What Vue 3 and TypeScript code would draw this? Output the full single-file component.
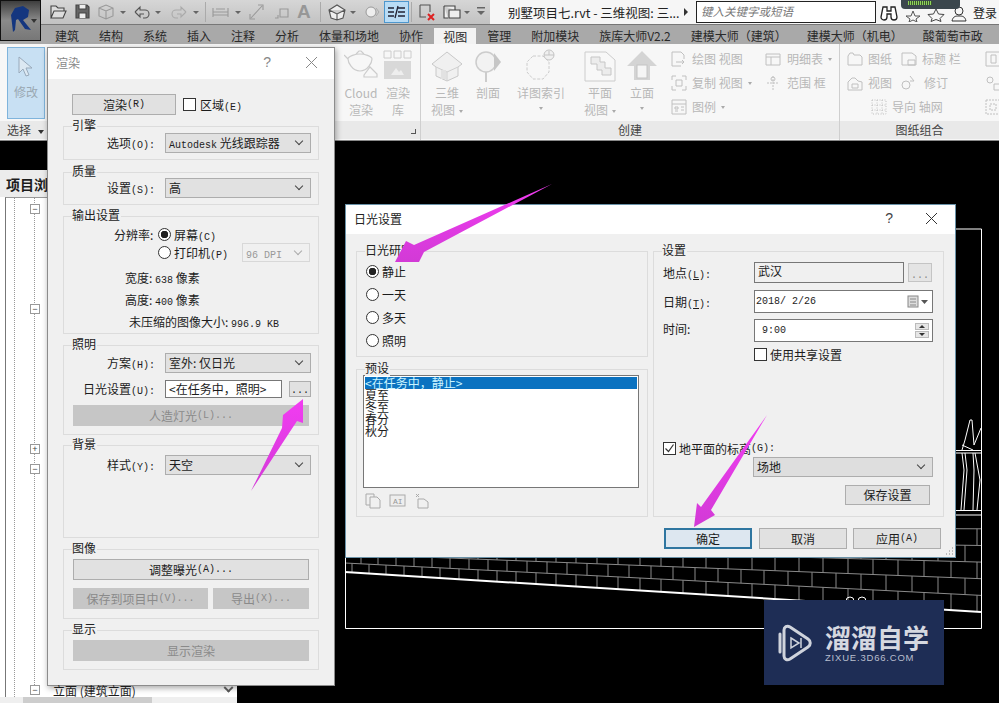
<script setup lang="ts">
const lineY = (x: number) => 572 + (x - 345) * (40 / 636)
const rowH = (x: number) => 9 + (x - 345) * 0.012
const yAt = (x: number, k: number) => lineY(x) - k * rowH(x)
const rows = [1, 2, 3, 4, 5]
const brickLines = rows.map((k) => `M345 ${yAt(345, k).toFixed(1)}L981 ${yAt(981, k).toFixed(1)}`).join('')
let joints = ''
for (const k of [0, 1, 2, 3, 4]) {
  let x = 352 + (k % 2) * 9
  while (x < 981) {
    joints += `M${x.toFixed(0)} ${yAt(x, k).toFixed(1)}L${x.toFixed(0)} ${yAt(x, k + 1).toFixed(1)}`
    x += 17 + (x - 345) * 0.016
  }
}
const treeNodes = [
  { sign: 'm', gap: 12 },
  { sign: 'm', gap: 90 },
  { sign: 'p', gap: 130 },
  { sign: 'm', gap: 10 },
]
const tabs = ['建筑', '结构', '系统', '插入', '注释', '分析', '体量和场地', '协作', '视图', '管理', '附加模块', '族库大师V2.2', '建模大师（建筑）', '建模大师（机电）', '酸葡萄市政']
</script>

<template>
  <div class="app">
    <!-- free drawing canvas of the CAD view -->
    <svg class="cad" width="999" height="703" viewBox="0 0 999 703">
      <path :d="brickLines" stroke="#8a8a8a" stroke-width="1" fill="none" />
      <path :d="joints" stroke="#8a8a8a" stroke-width="1" fill="none" />
      <path d="M345 572L981 612" stroke="#fff" stroke-width="2" fill="none" />
      <path d="M345.500 555V628.500H981.500V229H950" stroke="#fff" stroke-width="1" fill="none" />
      <path d="M956 450.500H981M956 453H981M956 510.500H981M956 515H981" stroke="#fff" stroke-width="1.200" fill="none" />
      <path d="M961 510L964 470 962 453M964 510L967 470 965 453M973 510L974 470 973 453M977 510L980 480 975 453M962 450L965 440 970 420 972 420 974 445M974 445L981 428M962 445L973 450M846 601a4 4 0 0 1 8 0M858 601a4 4 0 0 1 8 0" stroke="#fff" stroke-width="1" fill="none" />
    </svg>

    <header class="topbar">
      <div class="qat">
        <svg width="449" height="24" viewBox="41 0 449 24">
          <g fill="none" stroke="#444" stroke-width="1.100">
            <path d="M51 18V6h5l2 2h6v3M51 18l3-7h12l-3 7z" fill="#ddd" />
            <path d="M76 5h11l2 2v11H76z" fill="#666" />
            <path d="M79 5v4h7V5M79 18v-5h7v5" fill="#eee" />
          </g>
          <g fill="none" stroke="#999" stroke-width="1.100">
            <path d="M99 8l7-3 7 3v8l-7 3-7-3zM99 8l7 3 7-3M106 11v8" />
            <path d="M135 12l5-5v3h5a4 4 0 0 1 0 8h-2M135 12l5 5v-3h4" stroke="#555" />
            <path d="M186 12l-5-5v3h-5a4 4 0 0 0 0 8h2M186 12l-5 5v-3h-4" stroke="#aaa" />
            <path d="M213 8v9M228 8v9M213 12h15M213 15h15M216 9h9" />
            <path d="M251 18L262 6M258 5h5v5M250 14v5h5" />
            <path d="M275 18h3v-3M280 9h8v8h-8z" />
          </g>
          <text x="297" y="18" font-family="Liberation Sans" font-weight="700" font-size="19" fill="#979797">A</text>
          <path d="M329 10l8-5 8 5-2 8-6 2-6-2zM329 10l8 4 8-4M337 14v6" fill="#eee" stroke="#555" stroke-width="1.100" />
          <circle cx="371" cy="12" r="5" fill="#eee" stroke="#999" />
          <path d="M376 8l3 4-3 4" fill="none" stroke="#aaa" />
          <rect x="384.500" y="1.500" width="24" height="21" fill="#b9dcf5" stroke="#4e97cd" />
          <path d="M388 8h6M388 12h6M388 16h6M398 8h7M398 12h7M398 16h7M395 18l3-12" stroke="#223" stroke-width="1.300" fill="none" />
          <path d="M420 5h10v7M420 5v12h6" fill="none" stroke="#555" stroke-width="1.100" />
          <path d="M428 14l6 6M434 14l-6 6" stroke="#d22" stroke-width="2" />
          <path d="M444 6h11v4M444 6v12h4M449 10h11v8h-11z" fill="#eee" stroke="#444" stroke-width="1.100" />
          <g fill="#666">
            <path d="M120 11h6l-3 3zM155 11h6l-3 3zM193 11h6l-3 3zM235 11h6l-3 3zM350 11h6l-3 3zM464 11h6l-3 3z" />
            <path d="M477 11h8l-4 4zM477 7h8v1.500h-8z" />
          </g>
          <path d="M205.500 2v20M320.500 2v20M411.500 2v20" stroke="#aaa" />
        </svg>
      </div>
      <div class="title">别墅项目七.rvt - 三维视图: 三...</div>
      <div class="search-arrow"></div>
      <div class="search">键入关键字或短语</div>
      <div class="tools">
        <svg width="20" height="20" viewBox="0 0 20 20"><path d="M4 5h4v4h4V5h4l2 10a3 3 0 0 1-6 0v-3H8v3a3 3 0 0 1-6 0z" fill="#fff" stroke="#222" stroke-width="1.300" /></svg>
        <svg width="18" height="20" viewBox="0 0 18 20"><path d="M9 9l2 5 5 0-4 3 1 3-4-2-4 2 1-3-4-3 5 0z" fill="none" stroke="#555" /></svg>
        <svg width="18" height="20" viewBox="0 0 18 20"><path d="M9 7l2.500 5 5.500 .5-4 4 1 3-5-2-5 2 1-3-4-4 5.500-.5z" fill="none" stroke="#444" /></svg>
        <svg width="18" height="20" viewBox="0 0 18 20"><circle cx="9" cy="9" r="4" fill="none" stroke="#333" /><path d="M2 19c1-5 4-5 7-5s6 0 7 5z" fill="none" stroke="#333" /></svg>
        <span class="login">登录</span>
      </div>
    </header>

    <nav class="tabs">
      <span v-for="t in tabs" :key="t" class="tab" :class="{ active: t === '视图' }">{{ t }}</span>
    </nav>

    <section class="ribbon">
      <div class="panel p-select">
        <div class="panel-body">
          <div class="modify">
            <svg width="20" height="26" viewBox="0 0 20 26"><path d="M3 2v16l4-4 3 7 3-1-3-7h6z" fill="#dce8f2" stroke="#9ab" /></svg>
            <span>修改</span>
          </div>
        </div>
        <div class="panel-foot left">选择 <i class="tri dark"></i></div>
      </div>

      <div class="panel p-hidden">
        <div class="panel-body end">
          <div class="big cw40">
            <svg width="34" height="33" viewBox="0 0 34 33"><path d="M4 10c0-3 8-5 12-5s12 2 12 5-4 12-12 12S4 13 4 10zM12 5l3-3h2l3 3M4 10L0 6M20 26l6-8 7 7v3H20z" fill="none" stroke="#ccc" stroke-width="1.200" /></svg>
            <span>Cloud</span><span>渲染</span>
          </div>
          <div class="big cw32">
            <svg width="30" height="33" viewBox="0 0 30 33"><path d="M1 2h7v7H1zM11 2h7v7h-7zM21 2h7v7h-7z" fill="none" stroke="#ccc" /><rect x="1" y="12" width="27" height="18" fill="#d8d8d8" /><path d="M8 26l5-7 3 4 2-2 3 5z" fill="#eee" /></svg>
            <span>渲染</span><span>库</span>
          </div>
          <i class="launch"></i>
        </div>
        <div class="panel-foot"></div>
      </div>

      <div class="panel p-create">
        <div class="panel-body create-grid">
          <div class="big">
            <svg width="32" height="33" viewBox="0 0 32 33"><path d="M1 15L16 3l15 12-4 3v9l-11 5-11-5v-9z" fill="#f0f0f0" stroke="#c8c8c8" /><path d="M5 18l11 5 11-5M16 23v9" fill="none" stroke="#cfcfcf" /><path d="M10 21h5v9h-5z" fill="#e2e2e2" /></svg>
            <span>三维</span><span>视图<i class="tri mini"></i></span>
          </div>
          <div class="big">
            <svg width="28" height="33" viewBox="0 0 28 33"><circle cx="12" cy="13" r="10" fill="#f2f2f2" stroke="#ccc" stroke-width="1.500" /><path d="M20 4l7 9-7 9z" fill="#c6c6c6" /><path d="M12 23v10" stroke="#ccc" stroke-width="2" /></svg>
            <span>剖面</span>
          </div>
          <div class="big">
            <svg width="32" height="33" viewBox="0 0 32 33"><path d="M8 7h10l6 6v10l-6 7H8l-6-7V13z" fill="none" stroke="#ccc" stroke-dasharray="3 1.500" /><circle cx="24" cy="6" r="5" fill="#f0f0f0" stroke="#c4c4c4" /><path d="M19 6h10M24 2v4" stroke="#c4c4c4" /></svg>
            <span>详图索引</span><i class="tri mini block"></i>
          </div>
          <div class="big">
            <svg width="32" height="33" viewBox="0 0 32 33"><path d="M1 3h21l9 8v21H1z" fill="#f8f8f8" stroke="#ccc" /><path d="M7 8h9v5h5v6h6v7h-9v-5h-5v-6H7z" fill="#ececec" stroke="#c6c6c6" /></svg>
            <span>平面</span><span>视图<i class="tri mini"></i></span>
          </div>
          <div class="big">
            <svg width="30" height="33" viewBox="0 0 30 33"><path d="M15 2l15 15H23v14H7V17H0z" fill="#d4d4d4" /><rect x="10" y="16" width="10" height="13" fill="#f5f5f5" stroke="#c4c4c4" /></svg>
            <span>立面</span><i class="tri mini block"></i>
          </div>
          <div class="small-col first">
            <div class="si"><svg width="16" height="16" viewBox="0 0 16 16"><path d="M1 1h9l3 3v4M1 1v14h9" fill="none" stroke="#c0c0c0" /><path d="M5 11h8l-2-2m2 2l-2 2" fill="none" stroke="#c0c0c0" /></svg>绘图 视图</div>
            <div class="si"><svg width="16" height="16" viewBox="0 0 16 16"><path d="M1 1h4M1 1v4M11 1h4v4M1 11v4h4M11 15h4v-4M5 5h6v6H5z" fill="none" stroke="#c0c0c0" /></svg>复制 视图 <i class="tri mini"></i></div>
            <div class="si"><svg width="16" height="16" viewBox="0 0 16 16"><path d="M1 1h14v14H1zM1 5h14M4 8h3v2H4zM4 12h3M10 8h3M10 11h3" fill="none" stroke="#c0c0c0" /></svg>图例 <i class="tri mini"></i></div>
          </div>
          <div class="small-col">
            <div class="si"><svg width="18" height="16" viewBox="0 0 18 16"><path d="M2 3h14v11H2zM2 6h14M7 6v8" fill="none" stroke="#c0c0c0" /></svg>明细表 <i class="tri mini"></i></div>
            <div class="si"><svg width="18" height="16" viewBox="0 0 18 16"><path d="M9 1v14M3 8h12" stroke="#c0c0c0" stroke-dasharray="2 1" /><circle cx="9" cy="4" r="2" fill="none" stroke="#c0c0c0" /></svg>范围 框</div>
          </div>
        </div>
        <div class="panel-foot">创建</div>
      </div>

      <div class="panel p-sheet">
        <div class="panel-body sheet-grid">
          <div class="si"><svg width="16" height="16" viewBox="0 0 16 16"><path d="M1 5l2-3h3l1 2h6l2 2v8H1z" fill="none" stroke="#c0c0c0" /></svg>图纸</div>
          <div class="si"><svg width="16" height="16" viewBox="0 0 16 16"><path d="M1 2h10l4 3v9H1zM7 9h7v5H7z" fill="none" stroke="#c0c0c0" /></svg>标题 栏</div>
          <div class="si"><svg width="16" height="16" viewBox="0 0 16 16"><path d="M1 1h14v14H1zM6 4h5v8H6z" fill="none" stroke="#c0c0c0" /></svg></div>
          <div class="si"><svg width="16" height="16" viewBox="0 0 16 16"><path d="M1 7l4-4h3l3 3 4 1v8H1z" fill="none" stroke="#c0c0c0" /><path d="M5 9h6v4H5z" fill="none" stroke="#c0c0c0" /></svg>视图</div>
          <div class="si"><svg width="18" height="16" viewBox="0 0 18 16"><path d="M9 1l4 5H9M1 10a4 4 0 0 1 8 0 4 4 0 0 1-8 0z" fill="none" stroke="#c0c0c0" /></svg>修订</div>
          <div class="si"><svg width="16" height="16" viewBox="0 0 16 16"><circle cx="5" cy="5" r="3" fill="none" stroke="#c0c0c0" /><path d="M9 9h6v6H9z" fill="none" stroke="#c0c0c0" /></svg></div>
          <div></div>
          <div class="si shift"><svg width="16" height="16" viewBox="0 0 16 16"><path d="M1 1h14v14H1zM1 6h14M1 11h14M6 1v14M11 1v14" fill="none" stroke="#c0c0c0" stroke-dasharray="1 1.500" /></svg>导向 轴网</div>
          <div class="si"><svg width="16" height="16" viewBox="0 0 16 16"><path d="M1 1h14v14H1zM5 5h6v6H5z" fill="none" stroke="#c0c0c0" stroke-dasharray="2 1" /></svg></div>
        </div>
        <div class="panel-foot">图纸组合</div>
      </div>
    </section>

    <aside class="browser">
      <div class="b-head">项目浏览器</div>
      <div class="b-tree">
        <div v-for="(n, i) in treeNodes" :key="i" class="node" :class="'g' + n.gap">
          <span class="box">{{ n.sign === 'm' ? '−' : '+' }}</span>
        </div>
        <div class="node last">
          <span class="box">−</span><span class="node-text">立面 (建筑立面)</span><i class="chev"></i>
        </div>
      </div>
      <div class="b-scroll"><i class="thumb"></i></div>
    </aside>

    <!-- app button lies over the title and tab bars -->
    <div class="appbtn">
      <svg width="30" height="30" viewBox="0 0 30 30"><path d="M8 29L6 12 10 5l8-2 6 4-1 7-5 3 8 10-6-1-7-10-2 1-1 10z" fill="#14367f" /></svg>
      <i class="tri appdrop"></i>
    </div>
    <div class="chip"><i></i></div>

    <!-- render dialog -->
    <div class="dlg render">
      <div class="dlg-title"><span class="muted">渲染</span><span class="help">?</span>
        <svg width="13" height="13" viewBox="0 0 13 13"><path d="M1 1l11 11M12 1L1 12" stroke="#888" /></svg>
      </div>
      <div class="render-body">
        <div class="r-top">
          <div class="btn rbtn">渲染<span class="m">(R)</span></div>
          <i class="chk"></i><span>区域<span class="m">(E)</span></span>
        </div>
        <div class="group g1">
          <span class="legend">引擎</span>
          <div class="frow"><label>选项<span class="m">(O):</span></label><div class="sel"><span class="m">Autodesk</span> 光线跟踪器</div></div>
        </div>
        <div class="group g2">
          <span class="legend">质量</span>
          <div class="frow"><label>设置<span class="m">(S):</span></label><div class="sel">高</div></div>
        </div>
        <div class="group g3">
          <span class="legend">输出设置</span>
          <div class="res">
            <label>分辨率:</label><i class="radio on"></i><span>屏幕<span class="m">(C)</span></span>
          </div>
          <div class="res second">
            <label></label><i class="radio"></i><span class="printer">打印机<span class="m">(P)</span></span>
            <div class="sel dis"><span class="m">96 DPI</span></div>
          </div>
          <div class="info">宽度: <span class="m">638</span> 像素</div>
          <div class="info">高度: <span class="m">400</span> 像素</div>
          <div class="info wide">未压缩的图像大小: <span class="m">996.9 KB</span></div>
        </div>
        <div class="group g4">
          <span class="legend">照明</span>
          <div class="frow"><label>方案<span class="m">(H):</span></label><div class="sel">室外: 仅日光</div></div>
          <div class="frow sun"><label>日光设置<span class="m">(U):</span></label><div class="sun-field"><div class="input">&lt;在任务中，照明&gt;</div><div class="dots">...</div></div></div>
          <div class="btn off artificial">人造灯光<span class="m">(L)...</span></div>
        </div>
        <div class="group g5">
          <span class="legend">背景</span>
          <div class="frow"><label>样式<span class="m">(Y):</span></label><div class="sel">天空</div></div>
        </div>
        <div class="group g6">
          <span class="legend">图像</span>
          <div class="btn full">调整曝光<span class="m">(A)...</span></div>
          <div class="two">
            <div class="btn off">保存到项目中<span class="m">(V)...</span></div>
            <div class="btn off">导出<span class="m">(X)...</span></div>
          </div>
        </div>
        <div class="group g7">
          <span class="legend">显示</span>
          <div class="btn off full">显示渲染</div>
        </div>
      </div>
    </div>

    <!-- sun settings dialog -->
    <div class="dlg sunset">
      <div class="dlg-title sun-title"><span>日光设置</span><span class="help">?</span>
        <svg width="13" height="13" viewBox="0 0 13 13"><path d="M1 1l11 11M12 1L1 12" stroke="#333" /></svg>
      </div>
      <div class="sun-cols">
        <div class="sun-left">
          <div class="group study">
            <span class="legend">日光研究</span>
            <div class="ropt"><i class="radio on"></i>静止</div>
            <div class="ropt"><i class="radio"></i>一天</div>
            <div class="ropt"><i class="radio"></i>多天</div>
            <div class="ropt"><i class="radio"></i>照明</div>
          </div>
          <div class="group preset">
            <span class="legend">预设</span>
            <div class="list">
              <div class="li sel-li">&lt;在任务中，静止&gt;</div>
              <div class="li">夏至</div>
              <div class="li">冬至</div>
              <div class="li">春分</div>
              <div class="li">秋分</div>
            </div>
            <div class="list-tools">
              <svg width="17" height="16" viewBox="0 0 17 16"><path d="M1 1h8v3M1 1v11h4M5 4h7l3 3v8H5z" fill="none" stroke="#aaa" /></svg>
              <svg width="17" height="16" viewBox="0 0 17 16"><rect x="1" y="2" width="15" height="11" fill="#eee" stroke="#aaa" /><text x="4" y="11" font-family="Liberation Mono" font-size="8" fill="#999">AI</text></svg>
              <svg width="17" height="16" viewBox="0 0 17 16"><path d="M3 1l3 3M6 1L3 4M5 6h6l4 3v6H5z" fill="none" stroke="#aaa" /></svg>
            </div>
          </div>
        </div>
        <div class="group settings">
          <span class="legend">设置</span>
          <div class="srow"><label>地点<span class="m">(<u>L</u>):</span></label><div class="input gray">武汉</div><div class="dots two-d">...</div></div>
          <div class="srow date"><label>日期<span class="m">(<u>T</u>):</span></label>
            <div class="input tall"><span class="m">2018/ 2/26</span>
              <svg width="22" height="14" viewBox="0 0 22 14"><rect x="1" y="1" width="10" height="11" fill="#ddd" stroke="#888" /><path d="M3 4h6M3 7h6M3 10h6" stroke="#888" /><path d="M14 5h7l-3.500 4z" fill="#555" /></svg>
            </div>
          </div>
          <div class="srow time"><label>时间:</label>
            <div class="input tall"><span class="m pad">9:00</span>
              <div class="spin"><i class="up"></i><i class="down"></i></div>
            </div>
          </div>
          <div class="srow check"><label></label><i class="chk"></i><span>使用共享设置</span></div>
          <div class="ground"><i class="chk checked"><svg width="11" height="11" viewBox="0 0 11 11"><path d="M1.500 5.500l3 3 5-7" fill="none" stroke="#333" stroke-width="1.200" /></svg></i>地平面的标高<span class="m">(G):</span></div>
          <div class="sel site">场地</div>
          <div class="btn save">保存设置</div>
        </div>
      </div>
      <div class="sun-actions">
        <div class="btn act primary">确定</div>
        <div class="btn act">取消</div>
        <div class="btn act">应用<span class="m">(A)</span></div>
      </div>
      <svg class="grip" width="10" height="10" viewBox="0 0 10 10"><path d="M8 2h1M5 5h1M8 5h1M2 8h1M5 8h1M8 8h1" stroke="#bbb" stroke-width="2" /></svg>
    </div>

    <!-- annotation arrows -->
    <svg class="arrows" width="999" height="703" viewBox="0 0 999 703">
      <defs>
        <linearGradient id="mg" x1="0" y1="0" x2="0" y2="1">
          <stop offset="0" stop-color="#f23cf2" />
          <stop offset="1" stop-color="#d23ad6" />
        </linearGradient>
      </defs>
      <path d="M552 184L424 252L419 262L395 262L406 241L414 245z" fill="url(#mg)" />
      <path d="M303 399L303 423L297 421L251 491L282 428L283 415z" fill="url(#mg)" />
      <path d="M767 415L711 510L715 515L694 527L697 503L701 507z" fill="url(#mg)" />
    </svg>

    <div class="mark">
      <svg width="36" height="38" viewBox="0 0 36 38">
        <path d="M6 6c0-3 3-5 6-3l18 12c3 2 3 6 0 8L12 35c-3 2-6 0-6-3z" fill="none" stroke="#cfd3dc" stroke-width="3" />
        <path d="M2 10v18" stroke="#cfd3dc" stroke-width="3" stroke-linecap="round" />
        <path d="M13 14l8 5-8 5zM23 14v10" fill="none" stroke="#cfd3dc" stroke-width="1.500" />
      </svg>
      <div class="mark-text">
        <div class="mt1">溜溜自学</div>
        <div class="mt2">ZIXUE.3D66.COM</div>
      </div>
    </div>
  </div>
</template>

<style>
html, body { margin: 0; background: #000; }
</style>

<style scoped>
.app { position: relative; width: 999px; height: 703px; overflow: hidden; background: #000; font-family: "Noto Sans CJK SC", "Liberation Sans", sans-serif; font-size: 12px; color: #1c1c1c; }
.cad, .arrows { position: absolute; left: 0; top: 0; }
.arrows { pointer-events: none; }
.m { font-family: "Liberation Mono", "Noto Sans CJK SC", monospace; font-size: 10px; }
i { display: inline-block; font-style: normal; }

/* title bar */
.topbar { position: relative; display: flex; height: 24px; background: #f6f6f6; box-sizing: border-box; padding-left: 41px; align-items: center; }
.qat { width: 449px; height: 24px; background: linear-gradient(#d6d6d6, #c2c2c2); }
.qat svg { display: block; }
.title { width: 172px; margin-left: 18px; white-space: nowrap; color: #222; font-size: 12.500px; }
.search-arrow { width: 0; height: 0; margin-left: 4px; border-left: 4px solid #333; border-top: 4px solid transparent; border-bottom: 4px solid transparent; }
.search { width: 180px; height: 22px; margin-left: 8px; box-sizing: border-box; background: #fff; border: 1px solid #222; padding-left: 4px; line-height: 19px; color: #777; font-style: italic; font-size: 11.500px; }
.tools { display: flex; align-items: center; gap: 5px; margin-left: 3px; }
.login { color: #222; }

/* tabs */
.tabs { position: relative; display: flex; gap: 20px; height: 20px; padding-left: 55px; background: #a9a9a9; white-space: nowrap; overflow: hidden; line-height: 21px; color: #2a2a2a; border-top: 1px solid #777; box-sizing: border-box; }
.tab.active { margin: 3px -9px 0; padding: 0 9px; background: #f2f2f2; line-height: 17px; }

/* ribbon */
.ribbon { position: relative; display: flex; height: 97px; background: #f7f7f7; border-bottom: 1px solid #888; box-sizing: border-box; color: #b8b8b8; }
.panel { display: flex; flex-direction: column; border-right: 1px solid #cfcfcf; overflow: hidden; flex: none; }
.panel-body { flex: 1; min-height: 0; }
.panel-foot { height: 18px; margin-bottom: 1px; background: #e9e9e9; text-align: center; line-height: 18px; color: #444; }
.panel-foot.left { padding-left: 7px; text-align: left; }
.p-select { width: 47px; border: 0; }
.p-hidden { width: 373px; }
.p-create { width: 418px; }
.p-sheet { flex: 1; border: 0; }
.modify { display: flex; flex-direction: column; align-items: center; box-sizing: border-box; width: 38px; height: 72px; margin: 3px 0 0 7px; padding-top: 7px; background: #c8e0f3; border: 1px solid #7fb4dc; color: #9aa8b2; gap: 2px; }
.end { position: relative; display: flex; justify-content: flex-end; padding-right: 7px; gap: 2px; }
.cw40 { width: 40px; }
.cw32 { width: 30px; }
.launch { position: absolute; right: 4px; bottom: -13px; width: 4px; height: 4px; border-right: 1px solid #555; border-bottom: 1px solid #555; }
.big { display: flex; flex-direction: column; align-items: center; line-height: 17px; padding-top: 5px; white-space: nowrap; }
.big svg { height: 33px; margin-bottom: 2px; }
.create-grid { display: grid; grid-template-columns: 42px 40px 66px 52px 32px 106px 75px; padding-left: 5px; }
.small-col { padding-top: 7px; display: flex; flex-direction: column; gap: 8px; }
.small-col.first { padding-left: 13px; }
.si { display: flex; align-items: center; gap: 5px; height: 16px; white-space: nowrap; line-height: 16px; }
.si svg { flex: none; }
.si .tri { margin-left: 0; }
.sheet-grid { display: grid; grid-template-columns: 54px 84px 60px; grid-auto-rows: 16px; row-gap: 8px; padding: 7px 0 0 7px; }
.shift { margin-left: -30px; }
.tri { width: 0; height: 0; border-left: 3px solid transparent; border-right: 3px solid transparent; border-top: 4px solid #666; margin-left: 4px; vertical-align: middle; }
.tri.mini { border-top-color: #aaa; border-left-width: 2px; border-right-width: 2px; border-top-width: 3px; }
.tri.block { display: block; margin: 6px auto 0; }
.tri.dark { border-top-color: #333; }

/* project browser */
.browser { margin-top: 29px; display: flex; flex-direction: column; width: 237px; height: 533px; background: #fff; }
.b-head { height: 27px; box-sizing: border-box; padding-left: 6px; background: #ececec; font-size: 14px; font-weight: 700; line-height: 28px; white-space: nowrap; overflow: hidden; }
.b-tree { position: relative; flex: 1; min-height: 0; border-left: 1px solid #777; margin-left: 5px; padding-left: 24px; border-top: 1px solid #999; }
.b-tree::before { content: ""; position: absolute; left: 8px; top: 0; bottom: 0; border-left: 1px dotted #999; }
.b-tree::after { content: ""; position: absolute; left: 28px; top: 0; bottom: 12px; border-left: 1px dotted #999; }
.node { position: relative; z-index: 1; display: flex; align-items: center; height: 10px; }
.g12 { margin-top: 6px; }
.g90 { margin-top: 90px; }
.g130 { margin-top: 130px; }
.g10 { margin-top: 10px; }
.last { margin-top: 210px; height: 12px; }
.box { display: block; box-sizing: border-box; width: 10px; height: 10px; border: 1px solid #999; background: #fff; font-size: 9px; line-height: 8px; text-align: center; color: #444; font-family: "Liberation Sans", sans-serif; }
.node-text { margin-left: 13px; white-space: nowrap; }
.chev { margin-left: 89px; width: 5px; height: 5px; border-right: 2px solid #555; border-bottom: 2px solid #555; transform: rotate(45deg) translate(-2px, -2px); }
.b-scroll { height: 6px; background: #efefef; padding-left: 23px; }
.thumb { display: block; width: 129px; height: 6px; background: #cdcdcd; }

.appbtn { position: absolute; left: 0; top: 0; box-sizing: border-box; width: 41px; height: 41px; background: linear-gradient(#3e3e3e, #8a8a8a 50%, #777); border: 1px solid #111; padding: 2px 0 0 4px; }
.appbtn svg { display: block; }
.appdrop { position: absolute; left: 30px; top: 18px; border-top-color: #333; margin: 0; }
.chip { position: absolute; left: 901px; top: 0; width: 59px; height: 9px; background: #3b474d; border-radius: 0 0 4px 4px; }
.chip i { display: block; width: 24px; height: 4px; margin: 1px 0 0 7px; background: repeating-linear-gradient(90deg, #8fd35a 0 1px, #3b5a30 1px 2px); }

/* dialogs */
.dlg { position: absolute; box-sizing: border-box; background: #f0f0f0; }
.dlg-title { display: flex; align-items: center; box-sizing: border-box; height: 31px; background: #fff; padding: 0 16px 3px 8px; }
.help { margin-left: auto; margin-right: 34px; color: #888; font-family: "Liberation Sans", sans-serif; font-size: 14px; }
.muted { color: #888; }
.render { left: 47px; top: 47px; width: 288px; height: 639px; border: 1px solid #8c8c8c; box-shadow: 1px 2px 6px rgba(0, 0, 0, .35); }
.render-body { padding: 15px 15px 0 15px; }
.r-top { display: flex; align-items: center; height: 21px; margin-left: 9px; }
.rbtn { width: 104px; height: 21px; margin-right: 7px; }
.r-top .chk { margin-right: 4px; }
.btn { display: flex; align-items: center; justify-content: center; box-sizing: border-box; background: #e1e1e1; border: 1px solid #adadad; white-space: nowrap; padding-bottom: 1px; }
.btn.off { background: #c6c6c6; border-color: #c6c6c6; color: #8a8a8a; }
.group { position: relative; box-sizing: border-box; border: 1px solid #dcdcdc; }
.legend { position: absolute; left: 8px; top: -10px; line-height: 16px; background: #f0f0f0; color: #222; padding-right: 1px; white-space: nowrap; }
.g1 { margin-top: 11px; height: 34px; padding-top: 6px; }
.g2 { margin-top: 12px; height: 33px; padding-top: 5px; }
.g3 { margin-top: 11px; height: 118px; padding-top: 10px; }
.g4 { margin-top: 11px; height: 90px; padding-top: 7px; }
.g5 { margin-top: 10px; height: 93px; padding-top: 9px; }
.g6 { margin-top: 11px; height: 70px; padding: 9px 9px 0; }
.g7 { margin-top: 11px; height: 40px; padding: 9px 9px 0; }
.frow { display: grid; grid-template-columns: 91px 146px; column-gap: 10px; align-items: center; }
.frow label { text-align: right; white-space: nowrap; margin-top: -2px; }
.sel { position: relative; box-sizing: border-box; height: 20px; background: #e1e1e1; border: 1px solid #adadad; line-height: 17px; padding-left: 3px; white-space: nowrap; }
.sel::after { content: ""; position: absolute; right: 8px; top: 4px; width: 5px; height: 5px; border-right: 1px solid #444; border-bottom: 1px solid #444; transform: rotate(45deg); }
.sel.dis { width: 68px; height: 19px; background: #f0f0f0; border-color: #d8d8d8; color: #999; margin-left: auto; }
.sel.dis::after { border-color: #aaa; }
.res { display: flex; align-items: center; height: 14px; padding-left: 50px; white-space: nowrap; }
.res label { width: 44px; }
.res .radio { margin-right: 3px; }
.res.second { height: 19px; margin-top: 2px; padding-right: 8px; }
.printer { flex: none; }
.info { margin: 6px 0 0 61px; line-height: 13px; white-space: nowrap; }
.res.second + .info { margin-top: 9px; }
.info.wide { margin-left: 65px; }
.sun { margin-top: 7px; }
.sun-field { display: flex; gap: 7px; align-items: center; }
.input { box-sizing: border-box; background: #fff; border: 1px solid #777; white-space: nowrap; }
.sun-field .input { width: 117px; height: 18px; line-height: 15px; padding-left: 3px; }
.dots { display: flex; justify-content: center; align-items: flex-end; box-sizing: border-box; width: 22px; height: 16px; background: #e1e1e1; border: 1px solid #adadad; font-size: 10px; line-height: 10px; font-family: "Liberation Mono", monospace; }
.artificial { height: 21px; margin: 7px 9px 0; }
.full { height: 21px; }
.two { display: flex; gap: 5px; margin-top: 8px; }
.two .btn { height: 21px; }
.two .btn:first-child { width: 135px; }
.two .btn:last-child { flex: 1; }
.radio { box-sizing: border-box; width: 13px; height: 13px; border-radius: 50%; border: 1px solid #333; background: #fff; flex: none; }
.radio.on { background: radial-gradient(circle, #222 0 3.500px, #fff 4px); }
.chk { box-sizing: border-box; width: 13px; height: 13px; border: 1px solid #333; background: #fff; flex: none; }
.chk.checked { display: flex; align-items: center; justify-content: center; margin-right: 3px; }

.sunset { left: 345px; top: 204px; width: 611px; height: 354px; border: 1px solid #6a92a8; }
.sun-title { height: 29px; color: #222; padding: 0 17px 3px 8px; }
.sun-title .help { margin-right: 32px; color: #444; }
.sun-cols { display: flex; gap: 5px; padding: 17px 11px 0 10px; }
.sun-left { display: flex; flex-direction: column; gap: 12px; width: 292px; }
.study { height: 106px; padding: 12px 0 0 9px; }
.ropt { display: flex; align-items: center; gap: 3px; height: 15px; margin-bottom: 8px; line-height: 13px; }
.preset { height: 148px; padding: 5px 8px 0 6px; }
.list { box-sizing: border-box; height: 113px; background: #fff; border: 1px solid #777; padding: 1px; }
.li { height: 12px; line-height: 11px; white-space: nowrap; }
.sel-li { background: #0b72c0; color: #c8f4ff; }
.list-tools { display: flex; gap: 7px; margin: 5px 0 0 2px; }
.settings { flex: 1; height: 266px; padding-top: 10px; }
.srow { display: flex; align-items: center; height: 21px; padding-left: 9px; }
.srow label { width: 91px; flex: none; white-space: nowrap; margin-top: -1px; }
.srow .input.gray { width: 150px; height: 21px; background: #f0f0f0; line-height: 16px; padding-left: 3px; font-size: 12px; }
.dots.two-d { width: 24px; height: 19px; margin-left: 4px; color: #888; background: #e4e4e4; border-color: #c4c4c4; }
.tall { display: flex; align-items: center; justify-content: space-between; width: 179px; height: 23px; padding: 0 3px 0 1px; }
.pad { margin-left: 6px; }
.date { margin-top: 7px; }
.time { margin-top: 6px; height: 23px; }
.time label { margin-top: -4px; }
.date { height: 23px; }
.spin { display: flex; flex-direction: column; gap: 1px; }
.spin i { width: 14px; height: 7px; background: #e6e6e6; border: 1px solid #bbb; box-sizing: border-box; position: relative; }
.spin .up::after, .spin .down::after { content: ""; position: absolute; left: 3px; border-left: 3px solid transparent; border-right: 3px solid transparent; }
.spin .up::after { top: 1px; border-bottom: 3px solid #333; }
.spin .down::after { top: 1px; border-top: 3px solid #333; }
.check { margin-top: 5px; height: 14px; }
.check .chk { margin-right: 3px; }
.ground { display: flex; align-items: center; height: 14px; margin: 80px 0 0 9px; white-space: nowrap; }
.site { width: 180px; height: 20px; margin: 2px 0 0 99px; background: #dedede; }
.save { width: 85px; height: 20px; margin: 8px 0 0 191px; }
.sun-actions { display: flex; gap: 7px; justify-content: flex-end; padding: 11px 14px 0 0; }
.act { width: 88px; height: 21px; }
.act:nth-child(2) { margin-right: -1px; }
.primary { background: #dde7f0; border: 2px solid #2f76a0; }
.grip { position: absolute; right: 1px; bottom: 1px; }

/* watermark */
.mark { position: absolute; left: 764px; top: 600px; display: flex; align-items: center; gap: 11px; box-sizing: border-box; width: 180px; height: 85px; padding: 0 0 0 14px; background: #1e2d55; color: #d5d8e0; }
.mark-text { white-space: nowrap; }
.mt1 { font-size: 26px; line-height: 30px; font-weight: 700; }
.mt2 { font-family: "Liberation Sans", sans-serif; font-size: 9.500px; line-height: 12px; letter-spacing: .8px; color: #b9bfce; }
</style>
